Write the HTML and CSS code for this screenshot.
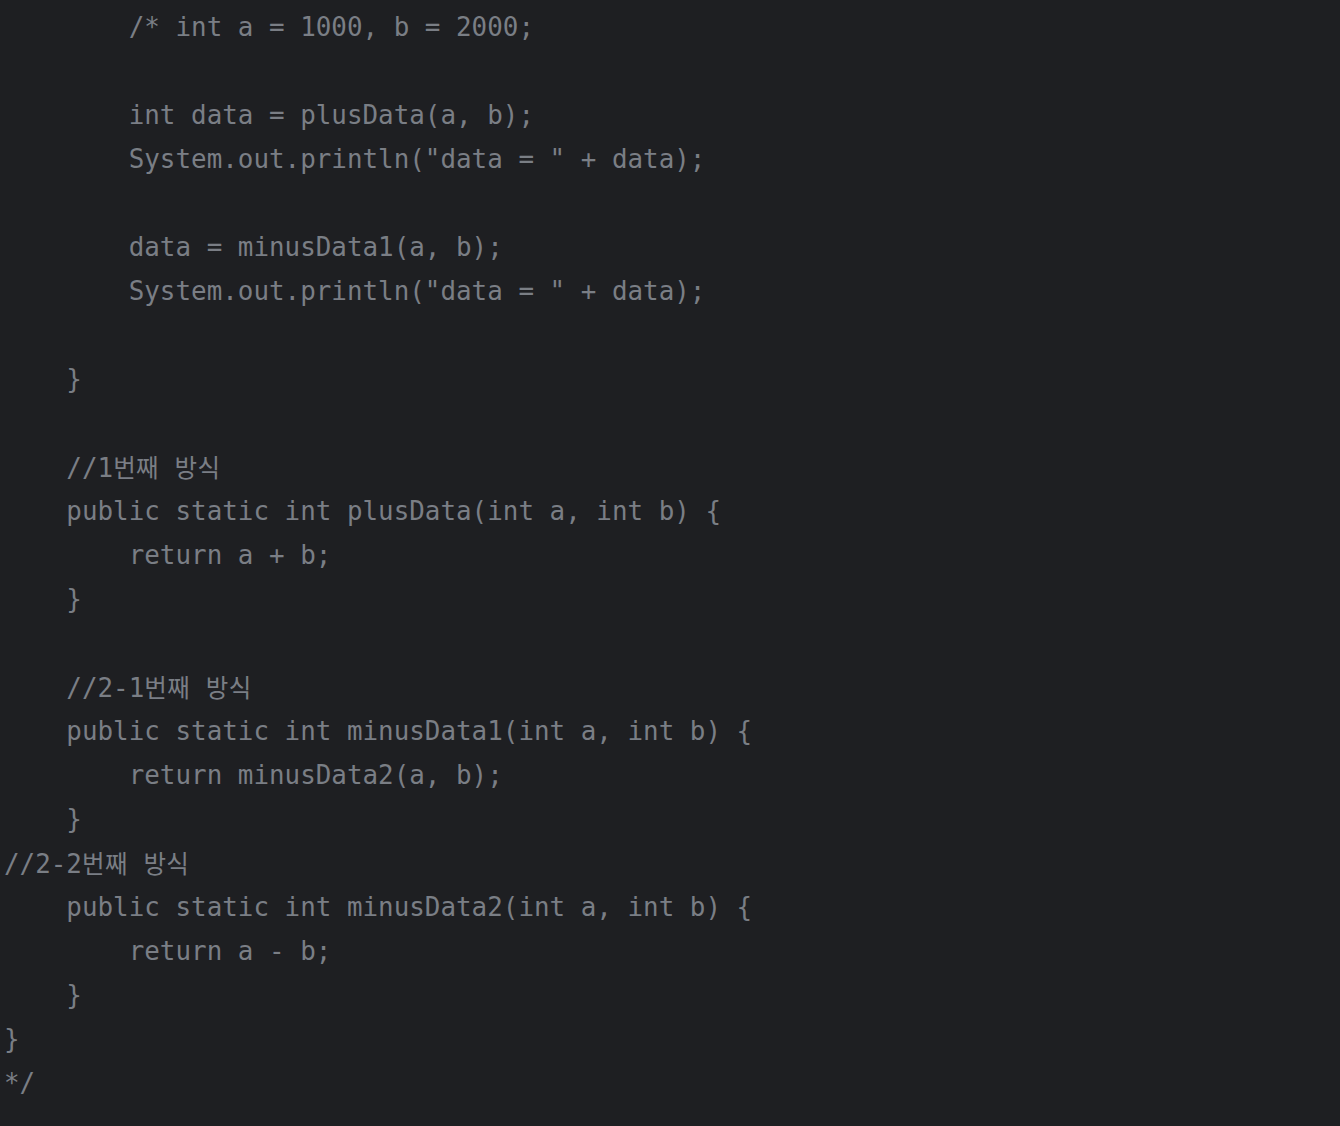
FILE: index.html
```html
<!DOCTYPE html>
<html lang="ko">
<head>
<meta charset="utf-8">
<title>Code</title>
<link rel="stylesheet" href="styles.css">
</head>
<body>
<div class="editor">
<div class="line">        /* int a = 1000, b = 2000;</div>
<div class="line"> </div>
<div class="line">        int data = plusData(a, b);</div>
<div class="line">        System.out.println("data = " + data);</div>
<div class="line"> </div>
<div class="line">        data = minusData1(a, b);</div>
<div class="line">        System.out.println("data = " + data);</div>
<div class="line"> </div>
<div class="line">    }</div>
<div class="line"> </div>
<div class="line">    //1<span class="ko">번째</span> <span class="ko">방식</span></div>
<div class="line">    public static int plusData(int a, int b) {</div>
<div class="line">        return a + b;</div>
<div class="line">    }</div>
<div class="line"> </div>
<div class="line">    //2-1<span class="ko">번째</span> <span class="ko">방식</span></div>
<div class="line">    public static int minusData1(int a, int b) {</div>
<div class="line">        return minusData2(a, b);</div>
<div class="line">    }</div>
<div class="line">//2-2<span class="ko">번째</span> <span class="ko">방식</span></div>
<div class="line">    public static int minusData2(int a, int b) {</div>
<div class="line">        return a - b;</div>
<div class="line">    }</div>
<div class="line">}</div>
<div class="line">*/</div>
</div>
</body>
</html>
```
FILE: styles.css
```css
html, body {
  margin: 0;
  padding: 0;
  background: #1e1f22;
}
body {
  width: 1340px;
  height: 1126px;
  overflow: hidden;
}
.editor {
  padding: 5px 0 0 4px;
  font-family: "DejaVu Sans Mono", "Noto Sans CJK KR", monospace;
  font-size: 25.9px;
  line-height: 44px;
  color: #7a7e85;
}
.line {
  white-space: pre;
  height: 44px;
}
.ko {
  font-family: "Noto Sans CJK KR", sans-serif;
  font-size: 24.5px;
  letter-spacing: 0.4px;
}
```
